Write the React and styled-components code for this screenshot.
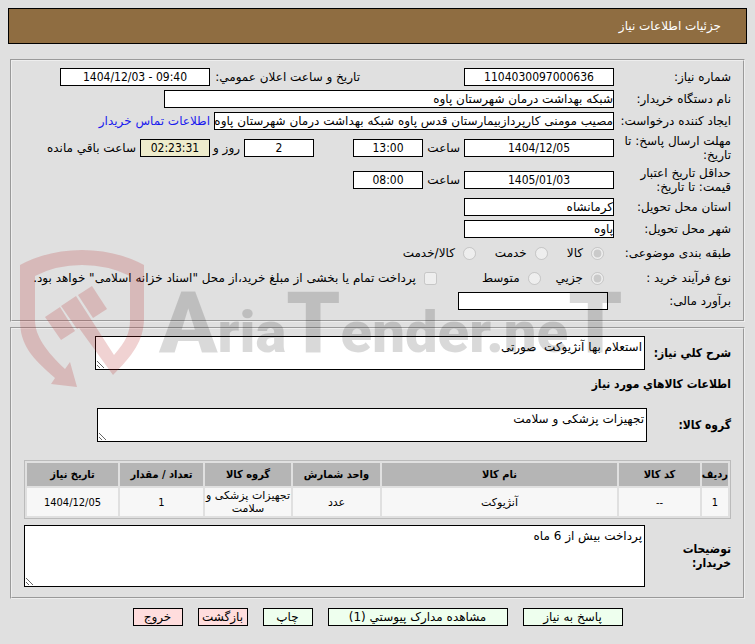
import styled, { createGlobalStyle } from 'styled-components';

const fonts = {
  text: '"DejaVu Sans", sans-serif',
  narrow: '"DejaVu Sans Condensed", "DejaVu Sans", sans-serif',
};

const GlobalStyle = createGlobalStyle`
  body {
    margin: 8px;
    background: #e0e0e0;
    color: #000;
    font: 12px/14px ${fonts.text};
  }

  input, textarea, button {
    box-sizing: border-box;
    font: inherit;
    color: inherit;
  }
`;

const Page = styled.div`
  direction: rtl;
`;

const TitleBar = styled.header`
  padding: 10px 25px;
  margin-bottom: 15px;
  border: 1px solid #000;
  background: #8f6d41;
  color: #fff;
`;

const Title = styled.h1`
  margin: 0;
  font-size: 12px;
  line-height: 14px;
  font-weight: normal;
`;

const Form = styled.form`
  position: relative;
  display: flex;
  flex-direction: column;
  gap: 5px;
  margin: 0 2px;
`;

const Panel = styled.fieldset`
  min-width: 0;
  margin: 0;
  padding: 7px 12px 10px;
  border: 2px groove #eee;
`;

const Rows = styled.div`
  display: flex;
  flex-direction: column;
  gap: 4px;
`;

const Row = styled.div`
  display: flex;
  align-items: center;
  min-height: ${p => p.$height || 18}px;
`;

const Label = styled.label`
  flex: none;
  box-sizing: border-box;
  width: ${p => p.$width || 117}px;
  padding-inline-end: 4px;
`;

const BoldLabel = styled(Label)`
  font-family: ${fonts.narrow};
  font-weight: bold;
`;

const Unit = styled.label`
  flex: none;
  box-sizing: border-box;
  width: ${p => p.$width}px;
  padding: 0 4px;
  white-space: nowrap;
`;

const TextInput = styled.input`
  flex: 0 1 ${p => p.$width || 150}px;
  min-width: 0;
  height: 18px;
  padding: 0;
  border: 1px solid #000;
  background: #fff;
`;

const NumberInput = styled(TextInput)`
  background: ${p => p.$highlight ? '#eeeccc' : '#fff'};
  font-family: ${fonts.narrow};
  text-align: center;
`;

const Spacer = styled.span`
  flex: 0 1 ${p => p.$width}px;
`;

const ContactLink = styled.a`
  margin-inline-start: 4px;
  color: #1a1aee;
  text-decoration: none;
  white-space: nowrap;
`;

const Choices = styled.div`
  display: flex;
  gap: ${p => p.$gap}px;
  padding-inline-start: 10px;
`;

const Choice = styled.label`
  display: flex;
  align-items: center;
  gap: 8px;
  white-space: nowrap;

  input {
    width: 13px;
    height: 13px;
    margin: 0;
  }
`;

const TextArea = styled.textarea`
  flex: ${p => p.$width ? `0 1 ${p.$width}px` : '1'};
  min-width: 0;
  height: ${p => p.$height || 34}px;
  padding: 3px 2px;
  border: 1px solid #000;
  background: #fff;
`;

const Heading = styled.h2`
  margin: 7px 0 17px;
  font-family: ${fonts.narrow};
  font-size: 12px;
  line-height: 14px;
`;

const ItemTable = styled.table`
  width: 100%;
  margin: 18px 0 6px;
  border: 1px solid #bbb;
  border-spacing: 2px;
  table-layout: fixed;
  font-size: 11px;
  line-height: 13px;
  text-align: center;

  th {
    height: 23px;
    padding: 0;
    background: #b5b5b5;
    font-family: ${fonts.narrow};
    white-space: nowrap;
  }
`;

const Cell = styled.td`
  height: 28px;
  padding: 0;
  background: #f7f7f7;
  font-family: ${p => p.$numeric ? fonts.narrow : fonts.text};
`;

const Actions = styled.div`
  display: flex;
  justify-content: center;
  gap: 15px;
  margin-top: 4px;
`;

const Button = styled.button`
  width: ${p => p.$width || 50}px;
  height: 18px;
  padding: 0;
  border: 1px solid #000;
  background: ${p => p.$leave ? '#ffdddd' : '#eeffee'};
  line-height: 14px;
  white-space: nowrap;
`;

const Watermark = styled.svg`
  position: absolute;
  top: 191px;
  left: 10px;
  width: 620px;
  height: 140px;
  pointer-events: none;
`;

const columns = [
  { title: 'ردیف', width: 26, numeric: true },
  { title: 'کد کالا', width: 81, numeric: true },
  { title: 'نام کالا' },
  { title: 'واحد شمارش', width: 87 },
  { title: 'گروه کالا', width: 86 },
  { title: 'تعداد / مقدار', width: 83, numeric: true },
  { title: 'تاریخ نیاز', width: 91, numeric: true },
];

const items = [
  ['1', '--', 'آنژیوکت', 'عدد', 'تجهیزات پزشکی و سلامت', '1', '1404/12/05'],
];

const BrandMark = () => (
  <Watermark viewBox="20 250 620 140" direction="ltr" aria-hidden="true">
    <g fill="#b41e1e" fillOpacity="0.2">
      <path d="M20 265Q48 250 82 250Q116 250 144 265V318C144 341 132 356 113 375L79 328L77 329L61 306L76 296L114 355C126 341 130 333 130 320V276Q108 265 82 265Q56 265 35 276V320C35 336 46 351 65 369L70 362L77 387L51 384L55 378C32 358 20 345 20 320Z" />
      <path d="M45 317L60 307L75 331L61 340Z" />
      <path d="M78 295L92 286L107 309L93 318Z" />
    </g>
    <text
      x="159"
      y="352"
      fillOpacity="0.15"
      fontFamily="Roboto, sans-serif"
      fontWeight="900"
      fontSize="58"
    >
      <tspan fontSize="86">A</tspan>ria<tspan fontSize="86">T</tspan>ender.ne<tspan fontSize="86">T</tspan>
    </text>
  </Watermark>
);

const App = () => {
  return (
    <Page>
      <GlobalStyle />
      <TitleBar>
        <Title>جزئیات اطلاعات نیاز</Title>
      </TitleBar>

      <Form onSubmit={e => e.preventDefault()}>
        <Panel>
          <Rows>
            <Row>
              <Label htmlFor="number">شماره نیاز:</Label>
              <NumberInput id="number" readOnly value="1104030097000636" />
              <Spacer $width={104} />
              <Label htmlFor="announced" $width={150}>تاریخ و ساعت اعلان عمومي:</Label>
              <NumberInput id="announced" dir="ltr" readOnly value="1404/12/03 - 09:40" />
            </Row>
            <Row>
              <Label htmlFor="agency">نام دستگاه خریدار:</Label>
              <TextInput id="agency" $width={450} readOnly value="شبکه بهداشت درمان شهرستان پاوه" />
            </Row>
            <Row>
              <Label htmlFor="creator">ایجاد کننده درخواست:</Label>
              <TextInput
                id="creator"
                $width={400}
                readOnly
                value="مصیب مومنی کارپردازبیمارستان قدس پاوه شبکه بهداشت درمان شهرستان پاوه"
              />
              <ContactLink href="#contact">اطلاعات تماس خریدار</ContactLink>
            </Row>
            <Row $height={28}>
              <Label htmlFor="deadline">مهلت ارسال پاسخ: تا تاریخ:</Label>
              <NumberInput id="deadline" readOnly value="1404/12/05" />
              <Unit htmlFor="deadlineTime" $width={41}>ساعت</Unit>
              <NumberInput id="deadlineTime" $width={70} readOnly value="13:00" />
              <Spacer $width={39} />
              <NumberInput id="days" $width={70} readOnly value="2" />
              <Unit htmlFor="days" $width={34}>روز و</Unit>
              <NumberInput id="hours" $width={70} $highlight readOnly value="02:23:31" />
              <Unit htmlFor="hours" $width={100}>ساعت باقي مانده</Unit>
            </Row>
            <Row $height={28}>
              <Label htmlFor="validity">حداقل تاریخ اعتبار قیمت: تا تاریخ:</Label>
              <NumberInput id="validity" readOnly value="1405/01/03" />
              <Unit htmlFor="validityTime" $width={41}>ساعت</Unit>
              <NumberInput id="validityTime" $width={70} readOnly value="08:00" />
            </Row>
            <Row>
              <Label htmlFor="province">استان محل تحویل:</Label>
              <TextInput id="province" readOnly value="کرمانشاه" />
            </Row>
            <Row>
              <Label htmlFor="city">شهر محل تحویل:</Label>
              <TextInput id="city" readOnly value="پاوه" />
            </Row>
            <Row $height={22} role="radiogroup" aria-labelledby="subject">
              <Label as="span" id="subject">طبقه بندی موضوعی:</Label>
              <Choices $gap={19}>
                <Choice><input type="radio" name="subject" disabled defaultChecked />کالا</Choice>
                <Choice><input type="radio" name="subject" disabled />خدمت</Choice>
                <Choice><input type="radio" name="subject" disabled />کالا/خدمت</Choice>
              </Choices>
            </Row>
            <Row $height={20} role="radiogroup" aria-labelledby="process">
              <Label as="span" id="process">نوع فرآیند خرید :</Label>
              <Choices $gap={15}>
                <Choice><input type="radio" name="process" disabled defaultChecked />جزیي</Choice>
                <Choice><input type="radio" name="process" disabled />متوسط</Choice>
              </Choices>
              <Spacer $width={45} />
              <Choice>
                <input type="checkbox" disabled />
                پرداخت تمام یا بخشی از مبلغ خرید،از محل "اسناد خزانه اسلامی" خواهد بود.
              </Choice>
            </Row>
            <Row>
              <Label htmlFor="estimate" $width={123}>برآورد مالی:</Label>
              <TextInput id="estimate" readOnly value="" />
            </Row>
          </Rows>
        </Panel>

        <Panel>
          <Row>
            <BoldLabel htmlFor="summary" $width={86}>شرح کلي نیاز:</BoldLabel>
            <TextArea id="summary" $width={550} readOnly value="استعلام بها آنژیوکت  صورتی" />
          </Row>
          <Heading>اطلاعات کالاهاي مورد نیاز</Heading>
          <Row>
            <BoldLabel htmlFor="group" $width={84}>گروه کالا:</BoldLabel>
            <TextArea id="group" $width={550} readOnly value="تجهیزات پزشکی و سلامت" />
          </Row>

          <ItemTable>
            <colgroup>
              {columns.map(c => <col key={c.title} width={c.width} />)}
            </colgroup>
            <thead>
              <tr>
                {columns.map(c => <th key={c.title} scope="col">{c.title}</th>)}
              </tr>
            </thead>
            <tbody>
              {items.map(item => (
                <tr key={item[0]}>
                  {item.map((value, i) => (
                    <Cell key={columns[i].title} $numeric={columns[i].numeric}>{value}</Cell>
                  ))}
                </tr>
              ))}
            </tbody>
          </ItemTable>

          <Row>
            <BoldLabel htmlFor="notes" $width={86}>توضیحات خریدار:</BoldLabel>
            <TextArea id="notes" $height={62} readOnly value="پرداخت بیش از 6 ماه" />
          </Row>
        </Panel>

        <Actions>
          <Button type="submit" $width={100}>پاسخ به نیاز</Button>
          <Button type="button" $width={180}>مشاهده مدارک پیوستي (1)</Button>
          <Button type="button">چاپ</Button>
          <Button type="button" $leave>بازگشت</Button>
          <Button type="button" $leave>خروج</Button>
        </Actions>

        <BrandMark />
      </Form>
    </Page>
  );
};

export default App;
